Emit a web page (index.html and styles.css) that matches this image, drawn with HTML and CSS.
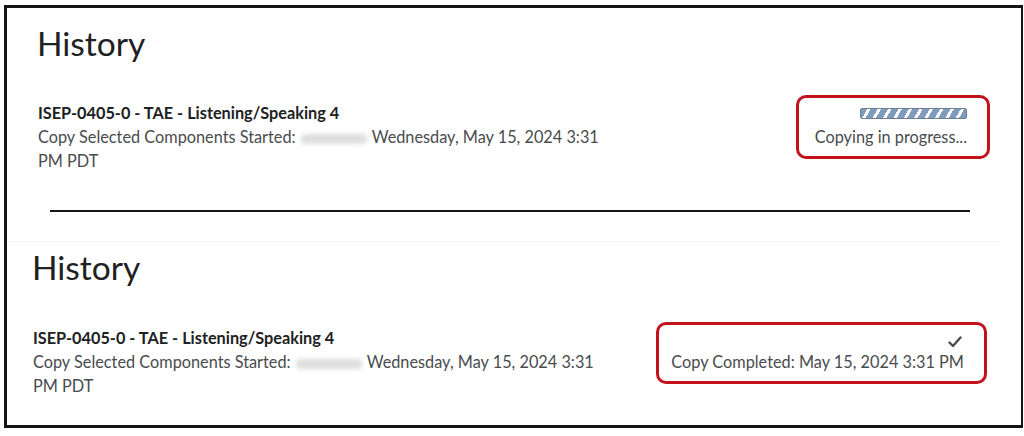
FILE: index.html
```html
<!DOCTYPE html>
<html lang="en">
<head>
  <meta charset="UTF-8">
  <title>History</title>
  <link rel="stylesheet" href="styles.css">
</head>
<body>

  <div class="frame">

    <!-- Copy in progress -->
    <div class="panel first">
      <h1 class="title">History</h1>
      <div class="entry">
        <div class="info">
          <div class="course">ISEP-0405-0 - TAE - Listening/Speaking 4</div>
          <div class="meta">Copy Selected Components Started: <span class="blur"></span> Wednesday, May 15, 2024 3:31 PM PDT</div>
        </div>
        <div class="status progress-box">
          <div class="bar"></div>
          <div class="status-text">Copying in progress...</div>
        </div>
      </div>
    </div>

    <hr class="divider">

    <!-- Copy completed -->
    <div class="panel second">
      <h1 class="title">History</h1>
      <div class="entry">
        <div class="info">
          <div class="course">ISEP-0405-0 - TAE - Listening/Speaking 4</div>
          <div class="meta">Copy Selected Components Started: <span class="blur"></span> Wednesday, May 15, 2024 3:31 PM PDT</div>
        </div>
        <div class="status done-box">
          <svg class="check" width="14" height="12" viewBox="0 0 14 12">
            <path d="M1.5 6.5 L5 10 L12.5 1.5" fill="none" stroke="#494c4e" stroke-width="2.4" stroke-linecap="round" stroke-linejoin="round"/>
          </svg>
          <div class="status-text">Copy Completed: May 15, 2024 3:31 PM</div>
        </div>
      </div>
    </div>

  </div>

</body>
</html>
```

FILE: styles.css
```css
/* Page frame */
body {
  margin: 0;
  background: #ffffff;
  font-family: Lato, "Open Sans", sans-serif;
  color: #494c4e;
}

.frame {
  margin: 5px 0 0 4px;
  width: 1014px;
  height: 417px;
  border: 3px solid #141414;
  border-right-width: 2px;
  overflow: hidden;
}

/* Panels */
.panel {
  padding-left: 31px;
}

.first {
  padding-top: 15px;
  padding-right: 31px;
}

.first .entry {
  margin-top: 38px;
}

.second {
  margin-top: 29px;
  margin-right: 21px;
  padding-top: 5px;
  padding-left: 26px;
  padding-right: 13px;
  border-top: 1px solid #f2f2f2;
}

.second .entry {
  margin-top: 39px;
}

.title {
  margin: 0 0 0 -1px;
  font-size: 33.5px;
  font-weight: 400;
  line-height: 40px;
  color: #202122;
}

.entry {
  display: flex;
  justify-content: space-between;
  align-items: flex-start;
  font-size: 16.3px;
  line-height: 24px;
}

.info {
  width: 582px;
}

.course {
  font-weight: 700;
  color: #202122;
}

.blur {
  display: inline-block;
  width: 66px;
  height: 10px;
  margin: 0 1px;
  vertical-align: -1px;
  background: #dedede;
  border-radius: 4px;
  filter: blur(2px);
}

/* Status boxes (red highlight) */
.status {
  display: flex;
  flex-direction: column;
  align-items: flex-end;
  border: 3px solid #c3121b;
  border-radius: 10px;
}

.progress-box {
  margin-top: -6px;
  padding: 10px 20px 7px 16px;
}

.done-box {
  margin-top: -4px;
  padding: 8px 20px 7px 12px;
}

.bar {
  width: 105px;
  height: 9px;
  margin-bottom: 6px;
  border: 1px solid #6f7f92;
  border-radius: 2px;
  background: repeating-linear-gradient(
    -60deg,
    #7f9cc0 0,
    #7f9cc0 6px,
    #ffffff 6px,
    #ffffff 9px
  );
}

.check {
  margin: 3px 2px 2px 0;
}

.status-text {
  white-space: nowrap;
}

/* Separator between the two shots */
.divider {
  margin: 37px 51px 0 43px;
  height: 0;
  border: none;
  border-top: 2px solid #141414;
}
```
